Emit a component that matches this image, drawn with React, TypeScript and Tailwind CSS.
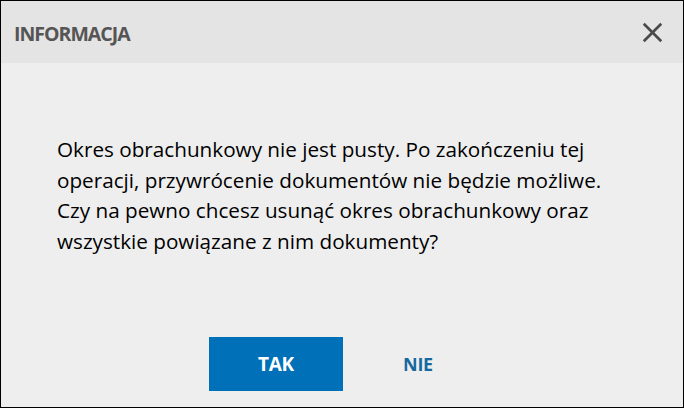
export default function App() {
  return (
    <div className="w-[684px] h-[408px] border border-black bg-[#eeeeee] flex flex-col font-['Open_Sans',sans-serif]">
      {/* Header */}
      <div className="h-[62px] shrink-0 bg-[#e4e4e4] flex items-start justify-between pl-[13px] pr-[20px]">
        <h1 className="mt-[20px] text-[19.5px] leading-[26px] font-bold text-[#555555] tracking-[-1px]">
          INFORMACJA
        </h1>
        <button className="mt-[21px] text-[#4a4a4a]">
          <XIcon className="w-[21px] h-[21px]" />
        </button>
      </div>

      {/* Message */}
      <div className="flex-1 pl-[56px] pr-[20px] pt-[71px]">
        <p className="text-[20.7px] leading-[30.5px] text-black">
          Okres obrachunkowy nie jest pusty. Po zakończeniu tej
          <br />
          operacji, przywrócenie dokumentów nie będzie możliwe.
          <br />
          Czy na pewno chcesz usunąć okres obrachunkowy oraz
          <br />
          wszystkie powiązane z nim dokumenty?
        </p>
      </div>

      {/* Actions */}
      <div className="flex items-center gap-[28px] pb-[16px] pl-[208px]">
        <button className="w-[134px] h-[54px] bg-[#0070b8] text-white text-[19px] font-bold tracking-[-0.3px]">
          TAK
        </button>
        <button className="w-[94px] h-[54px] text-[#16699f] text-[18px] font-bold tracking-[-0.3px]">
          NIE
        </button>
      </div>
    </div>
  );
}

function XIcon(props: React.SVGProps<SVGSVGElement>) {
  return (
    <svg
      {...props}
      xmlns="http://www.w3.org/2000/svg"
      viewBox="0 0 24 24"
      fill="none"
      stroke="currentColor"
      strokeWidth="3"
      strokeLinecap="butt"
    >
      <path d="M2 2l20 20" />
      <path d="M22 2L2 22" />
    </svg>
  );
}
